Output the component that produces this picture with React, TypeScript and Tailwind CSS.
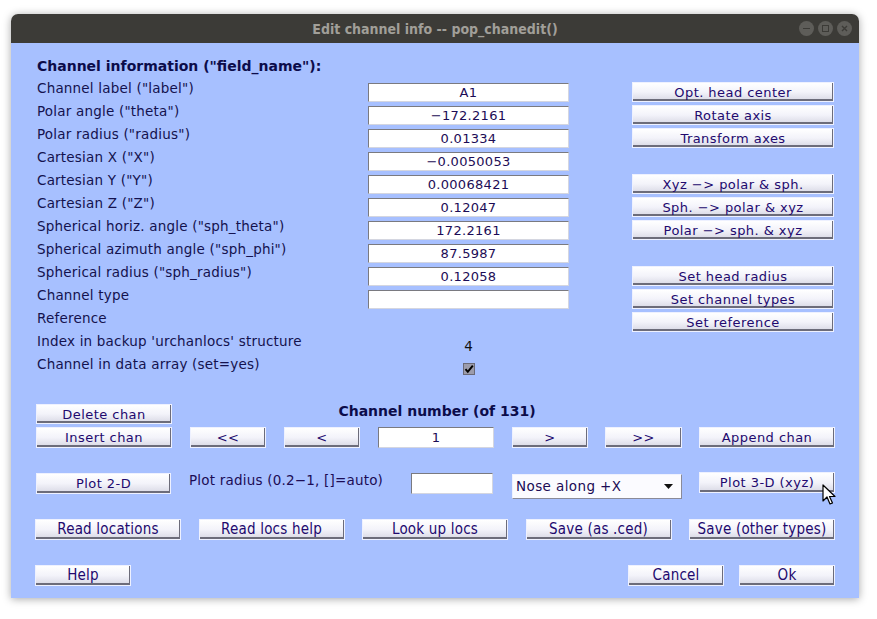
import React from "react";

const SANS = '"DejaVu Sans", "Liberation Sans", sans-serif';

function Btn({
  className = "",
  children,
  condensed = false,
}: {
  className?: string;
  children: React.ReactNode;
  condensed?: boolean;
}) {
  return (
    <div
      className={
        "flex items-center justify-center border border-[#eef1ff] bg-linear-to-b from-[#ffffff] via-[#f3f3fa] to-[#d8d8e4] shadow-[inset_-1px_-2px_0_#6c6c7a] text-[#22096e] leading-none whitespace-nowrap " +
        (condensed ? "font-stretch-condensed text-[15px] tracking-[0.2px] " : "text-[13px] tracking-[0.45px] ") +
        className
      }
    >
      {children}
    </div>
  );
}

function Field({ className = "", children }: { className?: string; children?: React.ReactNode }) {
  return (
    <div
      className={
        "flex items-center justify-center bg-white border border-t-[#7a7a80] border-l-[#7a7a80] border-b-[#d4d6e0] border-r-[#d4d6e0] text-[13px] tracking-[0.3px] text-[#1c0c55] leading-none " +
        className
      }
    >
      {children}
    </div>
  );
}

type Row = {
  label: string;
  field?: string | null;
  btn?: string;
  extra?: "four" | "check";
};

const rows: Row[] = [
  { label: 'Channel label ("label")', field: "A1", btn: "Opt. head center" },
  { label: 'Polar angle ("theta")', field: "\u2212172.2161", btn: "Rotate axis" },
  { label: 'Polar radius ("radius")', field: "0.01334", btn: "Transform axes" },
  { label: 'Cartesian X ("X")', field: "\u22120.0050053" },
  { label: 'Cartesian Y ("Y")', field: "0.00068421", btn: "Xyz \u2212> polar & sph." },
  { label: 'Cartesian Z ("Z")', field: "0.12047", btn: "Sph. \u2212> polar & xyz" },
  { label: 'Spherical horiz. angle ("sph_theta")', field: "172.2161", btn: "Polar \u2212> sph. & xyz" },
  { label: 'Spherical azimuth angle ("sph_phi")', field: "87.5987" },
  { label: 'Spherical radius ("sph_radius")', field: "0.12058", btn: "Set head radius" },
  { label: "Channel type", field: "", btn: "Set channel types" },
  { label: "Reference", btn: "Set reference" },
  { label: "Index in backup 'urchanlocs' structure", extra: "four" },
  { label: "Channel in data array (set=yes)", extra: "check" },
];

export default function App() {
  return (
    <div className="w-[877px] h-[619px] bg-white overflow-hidden" style={{ fontFamily: SANS }}>
      <div className="pt-[14px] pl-[11px]">
        <div className="relative w-[848px] shadow-[0_1px_9px_rgba(0,0,0,0.35)] rounded-t-[7px]">
          {/* title bar */}
          <div className="h-[29px] bg-[#3c3b37] rounded-t-[7px] flex items-center relative">
            <div className="flex-1 text-center text-[14px] font-bold font-stretch-condensed text-[#a19f99] leading-none">
              Edit channel info -- pop_chanedit()
            </div>
            <div className="absolute right-[7px] top-[7px] flex gap-[4px]">
              <div className="w-[15px] h-[15px] rounded-full bg-[#5e5d59] flex items-center justify-center">
                <div className="w-[7px] h-[1.5px] bg-[#3c3b37]" />
              </div>
              <div className="w-[15px] h-[15px] rounded-full bg-[#5e5d59] flex items-center justify-center">
                <div className="w-[7px] h-[7px] border-[1.5px] border-[#3c3b37]" />
              </div>
              <div className="w-[15px] h-[15px] rounded-full bg-[#5e5d59] flex items-center justify-center">
                <svg width="7" height="7" viewBox="0 0 7 7">
                  <path d="M1 1L6 6M6 1L1 6" stroke="#3c3b37" strokeWidth="1.4" />
                </svg>
              </div>
            </div>
          </div>

          {/* content */}
          <div className="h-[555px] bg-[#a7c0ff] flex flex-col text-[#14124e]">
            <div className="pt-[15px] pl-[26px] h-[31px] text-[14px] font-bold leading-[16px] text-[#0c0c4a]">
              Channel information ("field_name"):
            </div>
            <div className="mt-[7px] flex flex-col pl-[26px]">
              {rows.map((r, i) => (
                <div key={i} className="flex h-[23px] items-start">
                  <div className="w-[331px] text-[13.5px] leading-[16px] -mt-[1px] tracking-[0.2px]">{r.label}</div>
                  <div className="w-[201px] h-[23px] pt-[1.5px]">
                    {r.field !== undefined && r.field !== null && (
                      <Field className="w-[201px] h-[19px]">{r.field}</Field>
                    )}
                    {r.extra === "four" && (
                      <div className="text-center text-[13.5px] leading-[16px] pt-[2px] text-[#111]">4</div>
                    )}
                    {r.extra === "check" && (
                      <div className="flex justify-center pt-[4px] pl-[1px]">
                        <svg width="12" height="12" viewBox="0 0 12 12">
                          <rect x="0.5" y="0.5" width="11" height="11" fill="#9c9cab" stroke="#6a6a78" />
                          <path d="M2.5 6.2L4.8 8.8L9.8 2.6" stroke="#000" strokeWidth="2" fill="none" />
                        </svg>
                      </div>
                    )}
                  </div>
                  <div className="w-[63px]" />
                  <div className="w-[202px] pt-[1px]">
                    {r.btn && <Btn className="w-[202px] h-[20px]">{r.btn}</Btn>}
                  </div>
                </div>
              ))}
            </div>

            {/* channel number header */}
            <div className="mt-[24px] px-[25px] grid grid-cols-[1fr_auto_1fr] items-start">
              <Btn className="w-[136px] h-[20px] justify-self-start">Delete chan</Btn>
              <div className="text-[14px] font-bold leading-[16px] text-[#0c0c4a] pl-[4px] -mt-[1px]">Channel number (of 131)</div>
              <div />
            </div>

            {/* navigation */}
            <div className="mt-[3px] pl-[25px] flex items-start h-[21px]">
              <Btn className="w-[136px] h-[21px]">Insert chan</Btn>
              <Btn className="ml-[18px] w-[76px] h-[21px]">&lt;&lt;</Btn>
              <Btn className="ml-[18px] w-[76px] h-[21px]">&lt;</Btn>
              <Field className="ml-[18px] w-[116px] h-[21px]">1</Field>
              <Btn className="ml-[18px] w-[76px] h-[21px]">&gt;</Btn>
              <Btn className="ml-[17px] w-[77px] h-[21px]">&gt;&gt;</Btn>
              <Btn className="ml-[17px] w-[136px] h-[21px]">Append chan</Btn>
            </div>

            {/* plot row */}
            <div className="mt-[25px] pl-[25px] flex items-start h-[27px]">
              <Btn className="w-[135px] h-[21px]">Plot 2-D</Btn>
              <div className="ml-[18px] w-[218px] text-[13.5px] leading-[16px] -mt-[1px] tracking-[0.2px] text-[#1c0c55]">
                Plot radius (0.2{"\u2212"}1, []=auto)
              </div>
              <Field className="ml-[4px] w-[82px] h-[21px]" />
              <div className="ml-[19px] mt-[1px] w-[170px] h-[25px] flex items-center bg-[#fbfbff] border border-t-[#eef1ff] border-l-[#eef1ff] border-b-[#8a8a98] border-r-[#8a8a98] pl-[3px] pr-[8px]">
                <span className="flex-1 text-[13.5px] tracking-[0.4px] text-[#1c0c55] leading-none">Nose along +X</span>
                <svg width="9" height="5" viewBox="0 0 9 5">
                  <path d="M0 0H9L4.5 5Z" fill="#111" />
                </svg>
              </div>
              <Btn className="ml-[17px] w-[136px] h-[21px] -mt-[1px]">Plot 3-D (xyz)</Btn>
            </div>

            {/* locations row */}
            <div className="mt-[19px] px-[24px] flex justify-between items-start">
              <Btn condensed className="w-[146px] h-[21px]">Read locations</Btn>
              <Btn condensed className="w-[146px] h-[21px]">Read locs help</Btn>
              <Btn condensed className="w-[146px] h-[21px]">Look up locs</Btn>
              <Btn condensed className="w-[146px] h-[21px]">Save (as .ced)</Btn>
              <Btn condensed className="w-[146px] h-[21px]">Save (other types)</Btn>
            </div>

            {/* bottom row */}
            <div className="mt-[25px] px-[24px] flex items-start">
              <Btn condensed className="w-[96px] h-[21px]">Help</Btn>
              <div className="flex-1" />
              <Btn condensed className="w-[96px] h-[21px]">Cancel</Btn>
              <Btn condensed className="ml-[15px] w-[96px] h-[21px]">Ok</Btn>
            </div>
          </div>

          {/* mouse cursor */}
          <svg
            className="absolute left-[811px] top-[470px]"
            width="14"
            height="22"
            viewBox="0 0 14 22"
          >
            <path
              d="M1 1V17L5 13L8 20L10.5 19L7.5 12.5H13Z"
              fill="#fff"
              stroke="#000"
              strokeWidth="1.2"
              strokeLinejoin="round"
            />
          </svg>
        </div>
      </div>
    </div>
  );
}
